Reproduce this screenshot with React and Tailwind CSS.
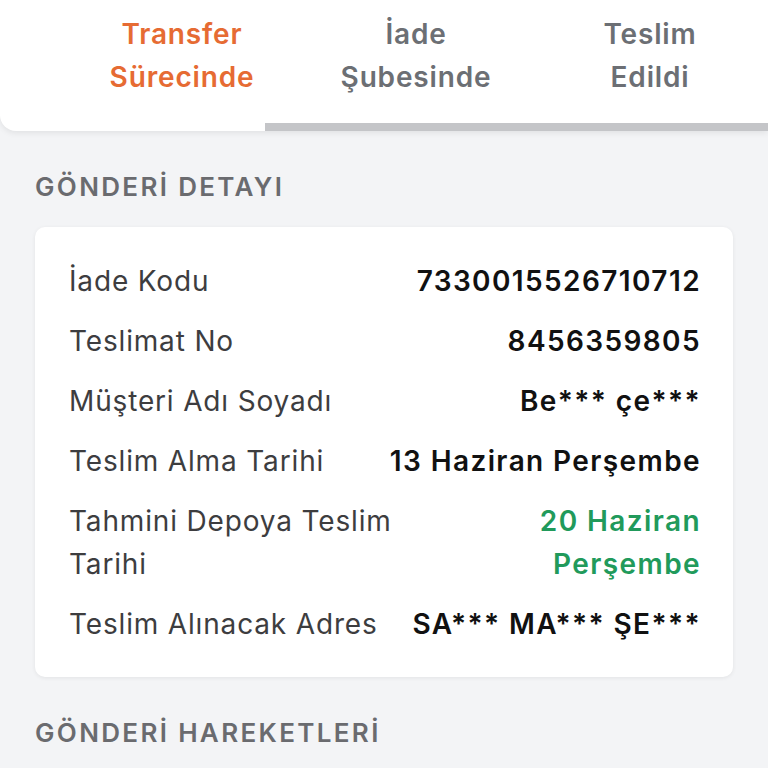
import React from "react";

const tabs = [
  { l1: "Transfer", l2: "Sürecinde", active: true },
  { l1: "İade", l2: "Şubesinde" },
  { l1: "Teslim", l2: "Edildi" },
];

const rows = [
  { label: "İade Kodu", value: "7330015526710712" },
  { label: "Teslimat No", value: "8456359805" },
  { label: "Müşteri Adı Soyadı", value: "Be*** çe***" },
  { label: "Teslim Alma Tarihi", value: "13 Haziran Perşembe" },
  { label: ["Tahmini Depoya Teslim", "Tarihi"], value: ["20 Haziran", "Perşembe"], green: true },
  { label: "Teslim Alınacak Adres", value: "SA*** MA*** ŞE***" },
];

export default function App() {
  return (
    <div
      className="w-[768px] h-[768px] overflow-hidden bg-[#f3f4f6]"
      style={{ fontFamily: "Inter, 'Noto Sans', sans-serif" }}
    >
      {/* Durum sekmeleri */}
      <div className="relative bg-white rounded-bl-[16px] shadow-[0_2px_6px_rgba(0,0,0,0.08)] h-[131px]">
        <div className="flex pl-[65px] pt-[13px]">
          {tabs.map((t) => (
            <div
              key={t.l1}
              className={`w-[234px] text-center text-[28px] font-semibold leading-[43px] tracking-[0.03em] ${
                t.active ? "text-[#e66b33]" : "text-[#6c6f74]"
              }`}
            >
              <div>{t.l1}</div>
              <div>{t.l2}</div>
            </div>
          ))}
        </div>
        <div className="absolute left-[265px] right-0 bottom-0 h-[8px] bg-[#c4c5c8]" />
      </div>

      <div className="px-[35px]">
        <h2 className="mt-[40px] text-[26px] font-semibold text-[#6a6b6f] leading-[32px] tracking-[0.09em]">
          GÖNDERİ DETAYI
        </h2>

        <div className="mt-[24px] bg-white rounded-[10px] shadow-[0_1px_4px_rgba(0,0,0,0.07)] pl-[34px] pr-[32px] pt-[33px] pb-[31px] flex flex-col gap-[17px]">
          {rows.map((r, i) => (
            <div key={i} className="flex justify-between items-start text-[28px] leading-[43px]">
              <div className="text-[#3d3d3f] tracking-[0.03em]">
                {Array.isArray(r.label) ? r.label.map((x) => <div key={x}>{x}</div>) : r.label}
              </div>
              <div
                className={`text-right font-semibold tracking-[0.05em] ${r.green ? "text-[#219a5b]" : "text-[#111111]"}`}
              >
                {Array.isArray(r.value) ? r.value.map((x) => <div key={x}>{x}</div>) : r.value}
              </div>
            </div>
          ))}
        </div>

        <h2 className="mt-[40px] text-[26px] font-semibold text-[#6a6b6f] leading-[32px] tracking-[0.09em]">
          GÖNDERİ HAREKETLERİ
        </h2>
      </div>
    </div>
  );
}
